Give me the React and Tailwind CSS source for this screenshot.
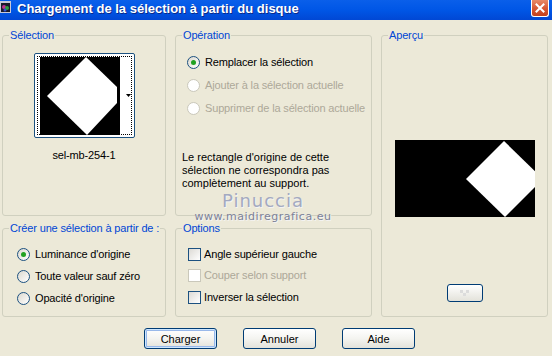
import React from "react";

const Radio = ({ label, checked, disabled }) => (
  <div className="flex items-center gap-[5px] h-[14px]">
    <span
      className={`w-[13px] h-[13px] rounded-full border flex items-center justify-center shrink-0 ${
        disabled
          ? "border-[#cac8bb] bg-white"
          : "border-[#1c5180] bg-linear-to-br from-[#dcd9cf] to-white"
      }`}
    >
      {checked && <span className="w-[5px] h-[5px] rounded-full bg-[#21a121]" />}
    </span>
    <span className={`whitespace-nowrap ${disabled ? "text-[#aca899]" : "text-black"}`}>{label}</span>
  </div>
);

const Check = ({ label, disabled }) => (
  <div className="flex items-center gap-[3px] h-[14px]">
    <span
      className={`w-[13px] h-[13px] border shrink-0 ${
        disabled
          ? "border-[#cac8bb] bg-white"
          : "border-[#1c5180] bg-linear-to-br from-[#dcdad5] to-white"
      }`}
    />
    <span className={`whitespace-nowrap ${disabled ? "text-[#aca899]" : "text-black"}`}>{label}</span>
  </div>
);

const Group = ({ title, className = "", children }) => (
  <fieldset className={`border border-[#d0d0bf] rounded-[3px] min-w-0 h-full ${className}`}>
    <legend className="ml-[6px] px-[1px] leading-[14px] whitespace-nowrap text-[#0046d5]">{title}</legend>
    {children}
  </fieldset>
);

const Button = ({ children, primary }) => (
  <button
    className={`w-[73px] h-[21px] rounded-[3px] border border-[#003c74] bg-linear-to-b from-white via-[#f4f4f0] to-[#e3e2da] text-black leading-[14px] ${
      primary ? "shadow-[inset_0_0_0_1px_#cee7ff,inset_0_0_0_2px_#98b8ea]" : ""
    }`}
  >
    {children}
  </button>
);

export default function App() {
  return (
    <div className="relative w-[552px] h-[356px] overflow-hidden bg-[#ece9d8] font-['Liberation_Sans',Arial,sans-serif] text-[11px] tracking-[-0.15px]">
      {/* Title bar */}
      <div className="h-[20px] flex items-start bg-linear-to-b from-[#0a5fea] via-[#0056e6] to-[#0147d4]">
        <svg width="12" height="13" viewBox="0 0 12 13" className="mt-[1px] shrink-0">
          <rect x="0" y="0" width="11" height="12" fill="#c8c8d8" />
          <rect x="1" y="2" width="9" height="9" fill="#1a1a2a" />
          <circle cx="4" cy="6" r="2" fill="#c03090" />
          <circle cx="7" cy="7" r="2" fill="#30a040" />
          <circle cx="5" cy="9" r="1.5" fill="#3050d0" />
        </svg>
        <span className="ml-[5px] mt-[1px] text-white font-bold text-[13px] leading-[16px] tracking-normal whitespace-nowrap [text-shadow:1px_1px_0_#0a2a8a]">
          Chargement de la sélection à partir du disque
        </span>
        <div className="ml-auto mr-[3px] w-[18px] h-[17px] rounded-b-[3px] border border-t-0 border-white bg-linear-to-b from-[#e88a68] via-[#d95a36] to-[#c2401c] flex items-center justify-center">
          <svg width="10" height="10" viewBox="0 0 10 10">
            <path d="M1.5 1.5 L8.5 8.5 M8.5 1.5 L1.5 8.5" stroke="white" strokeWidth="2" strokeLinecap="square" />
          </svg>
        </div>
      </div>

      {/* Body */}
      <div className="px-[2px] pt-[8px]">
        <div className="grid grid-cols-[164px_197px_167px] grid-rows-[188px_96px] gap-x-[9px] gap-y-[5px]">
          <Group title="Sélection">
            <div className="flex flex-col items-center pt-[11px]">
              <div className="w-[101px] h-[85px] border border-[#1c5180] rounded-[2px] bg-white p-[2px]">
                <div className="h-full border border-dotted border-black flex">
                  <svg width="80" height="78" viewBox="0 0 80 78" className="ml-[2px] shrink-0">
                    <rect width="80" height="78" fill="#000" />
                    <polygon points="46,0 77,30 77,46 47,78 7,39" fill="#fff" />
                  </svg>
                  <div className="flex-1 flex items-center justify-end">
                    <svg width="5" height="3" viewBox="0 0 5 3">
                      <polygon points="0,0 5,0 2.5,3" fill="#000" />
                    </svg>
                  </div>
                </div>
              </div>
              <div className="mt-[10px] leading-[14px] text-black">sel-mb-254-1</div>
            </div>
          </Group>

          <Group title="Opération">
            <div className="pl-[6px] pt-[13px]">
              <div className="pl-[5px] flex flex-col gap-[9px]">
                <Radio label="Remplacer la sélection" checked />
                <Radio label="Ajouter à la sélection actuelle" disabled />
                <Radio label="Supprimer de la sélection actuelle" disabled />
              </div>
              <p className="mt-[36px] leading-[13px] tracking-normal text-black">
                Le rectangle d'origine de cette
                <br />
                sélection ne correspondra pas
                <br />
                complètement au support.
              </p>
            </div>
          </Group>

          <Group title="Aperçu" className="row-span-2">
            <div className="flex flex-col items-center pt-[98px]">
              <svg width="140" height="77" viewBox="0 0 140 77">
                <rect width="140" height="77" fill="#000" />
                <polygon points="109,1 148,39 110,77 71,39" fill="#fff" />
              </svg>
              <div className="mt-[67px] w-[36px] h-[18px] rounded-[3px] border border-[#003c74] bg-linear-to-b from-white to-[#e3e2da] flex items-center justify-center">
                <svg width="10" height="6" viewBox="0 0 10 6">
                  <rect x="0" y="0" width="3" height="3" fill="#dcdcdc" />
                  <rect x="6" y="0" width="3" height="3" fill="#dcdcdc" />
                  <rect x="3" y="3" width="3" height="3" fill="#dcdcdc" />
                </svg>
              </div>
            </div>
          </Group>

          <Group title="Créer une sélection à partir de :">
            <div className="pl-[14px] pt-[12px] flex flex-col gap-[8px]">
              <Radio label="Luminance d'origine" checked />
              <Radio label="Toute valeur sauf zéro" />
              <Radio label="Opacité d'origine" />
            </div>
          </Group>

          <Group title="Options">
            <div className="pl-[12px] pt-[12px] flex flex-col gap-[7.5px]">
              <Check label="Angle supérieur gauche" />
              <Check label="Couper selon support" disabled />
              <Check label="Inverser la sélection" />
            </div>
          </Group>
        </div>

        <div className="mt-[11px] ml-[142px] flex gap-[26px] tracking-normal">
          <Button primary>Charger</Button>
          <Button>Annuler</Button>
          <Button>Aide</Button>
        </div>
      </div>

      {/* Watermark */}
      <div className="absolute left-[203px] top-[191px] w-[120px] flex flex-col items-center pointer-events-none tracking-normal">
        <span className="font-['DejaVu_Sans',sans-serif] text-[18px] leading-[20px] tracking-[1px] text-[#a3a9c0] [text-shadow:1px_1px_0_#f4f4f4]">
          Pinuccia
        </span>
        <span className="font-['DejaVu_Sans',sans-serif] text-[11px] leading-[11px] tracking-[0.5px] text-[#7c8298] [text-shadow:1px_1px_0_#f4f4f4]">
          www.maidiregrafica.eu
        </span>
      </div>
    </div>
  );
}
